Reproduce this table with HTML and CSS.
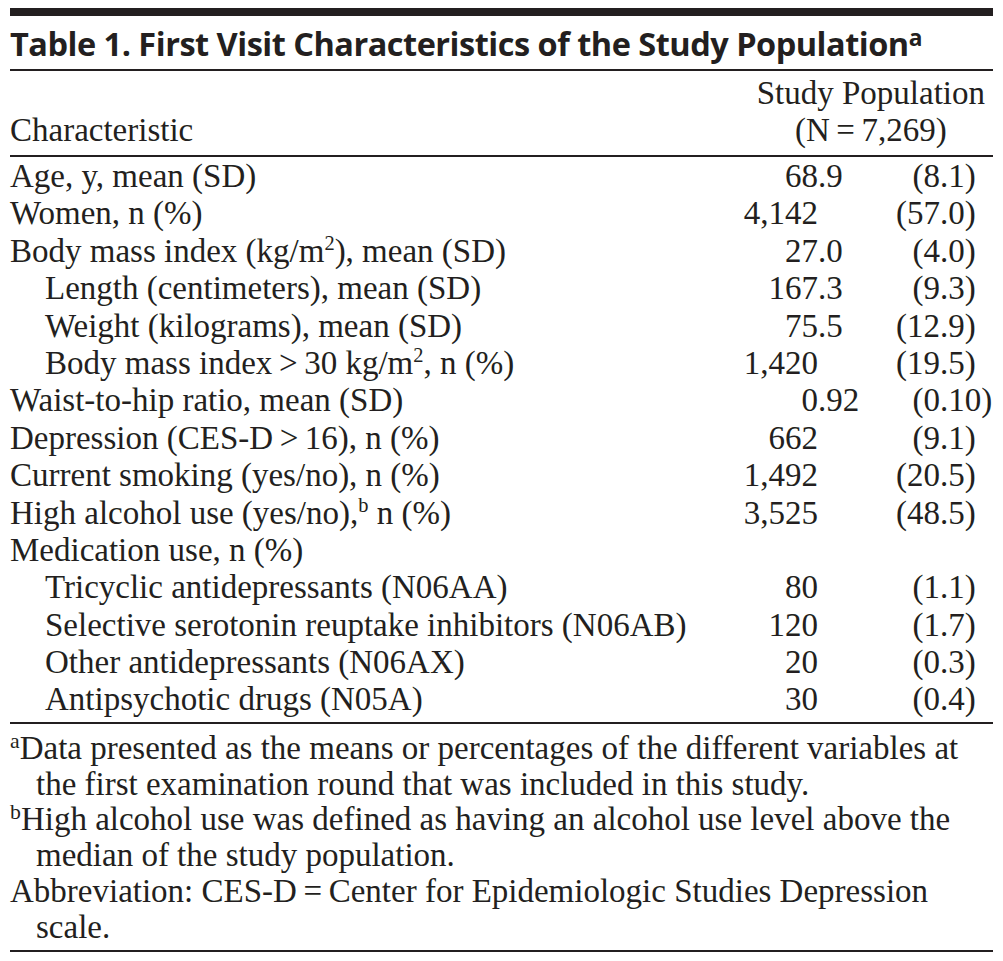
FILE: index.html
```html
<!DOCTYPE html>
<html>
<head>
<meta charset="utf-8">
<link rel="stylesheet" href="styles.css">
</head>
<body>
<div class="page">
  <div class="rule-thick"></div>
  <h1 class="title">Table 1. First Visit Characteristics of the Study Population<sup>a</sup></h1>
  <div class="head">
    <div class="head-label">Characteristic</div>
    <div class="head-col">Study Population<br>(N&#8201;=&#8201;7,269)</div>
  </div>
  <div class="body">
    <div class="row"><span class="lab">Age, y, mean (SD)</span><span class="num"><span class="i">68</span><span class="f">.9</span></span><span class="par"><span class="i">(8</span><span class="f">.1)</span></span></div>
    <div class="row"><span class="lab">Women, n (%)</span><span class="num"><span class="i">4,142</span><span class="f"></span></span><span class="par"><span class="i">(57</span><span class="f">.0)</span></span></div>
    <div class="row"><span class="lab">Body mass index (kg/m<sup>2</sup>), mean (SD)</span><span class="num"><span class="i">27</span><span class="f">.0</span></span><span class="par"><span class="i">(4</span><span class="f">.0)</span></span></div>
    <div class="row sub"><span class="lab">Length (centimeters), mean (SD)</span><span class="num"><span class="i">167</span><span class="f">.3</span></span><span class="par"><span class="i">(9</span><span class="f">.3)</span></span></div>
    <div class="row sub"><span class="lab">Weight (kilograms), mean (SD)</span><span class="num"><span class="i">75</span><span class="f">.5</span></span><span class="par"><span class="i">(12</span><span class="f">.9)</span></span></div>
    <div class="row sub"><span class="lab">Body mass index&#8201;&gt;&#8201;30 kg/m<sup>2</sup>, n (%)</span><span class="num"><span class="i">1,420</span><span class="f"></span></span><span class="par"><span class="i">(19</span><span class="f">.5)</span></span></div>
    <div class="row"><span class="lab">Waist-to-hip ratio, mean (SD)</span><span class="num"><span class="i">0</span><span class="f">.92</span></span><span class="par"><span class="i">(0</span><span class="f">.10)</span></span></div>
    <div class="row"><span class="lab">Depression (CES-D&#8201;&gt;&#8201;16), n (%)</span><span class="num"><span class="i">662</span><span class="f"></span></span><span class="par"><span class="i">(9</span><span class="f">.1)</span></span></div>
    <div class="row"><span class="lab">Current smoking (yes/no), n (%)</span><span class="num"><span class="i">1,492</span><span class="f"></span></span><span class="par"><span class="i">(20</span><span class="f">.5)</span></span></div>
    <div class="row"><span class="lab">High alcohol use (yes/no),<sup>b</sup> n (%)</span><span class="num"><span class="i">3,525</span><span class="f"></span></span><span class="par"><span class="i">(48</span><span class="f">.5)</span></span></div>
    <div class="row"><span class="lab">Medication use, n (%)</span></div>
    <div class="row sub"><span class="lab">Tricyclic antidepressants (N06AA)</span><span class="num"><span class="i">80</span><span class="f"></span></span><span class="par"><span class="i">(1</span><span class="f">.1)</span></span></div>
    <div class="row sub"><span class="lab">Selective serotonin reuptake inhibitors (N06AB)</span><span class="num"><span class="i">120</span><span class="f"></span></span><span class="par"><span class="i">(1</span><span class="f">.7)</span></span></div>
    <div class="row sub"><span class="lab">Other antidepressants (N06AX)</span><span class="num"><span class="i">20</span><span class="f"></span></span><span class="par"><span class="i">(0</span><span class="f">.3)</span></span></div>
    <div class="row sub"><span class="lab">Antipsychotic drugs (N05A)</span><span class="num"><span class="i">30</span><span class="f"></span></span><span class="par"><span class="i">(0</span><span class="f">.4)</span></span></div>
  </div>
  <div class="notes">
    <p><sup>a</sup>Data presented as the means or percentages of the different variables at the first examination round that was included in this study.</p>
    <p><sup>b</sup>High alcohol use was defined as having an alcohol use level above the median of the study population.</p>
    <p>Abbreviation: CES-D&#8201;=&#8201;Center for Epidemiologic Studies Depression scale.</p>
  </div>
</div>
</body>
</html>
```
FILE: styles.css
```css
html, body {
  margin: 0;
  padding: 0;
  background: #ffffff;
}
body {
  color: #231f20;
  font-family: "Liberation Serif", "Times New Roman", serif;
  font-size: 33px;
}
.page {
  width: 983px;
  margin-left: 10px;
  padding-top: 8px;
}
.rule-thick {
  height: 8px;
  background: #231f20;
}
.title {
  margin: 0;
  font-family: "Open Sans", Lato, sans-serif;
  font-weight: 700;
  font-size: 32.5px;
  line-height: 55px;
  height: 53px;
  border-bottom: 2px solid #231f20;
  letter-spacing: -0.5px;
  white-space: nowrap;
}
.title sup {
  font-size: 0.7em;
  line-height: 0;
  vertical-align: 0.45em;
  font-weight: 700;
}
.head {
  display: flex;
  justify-content: space-between;
  align-items: flex-end;
  line-height: 37px;
  padding: 4px 8px 6px 0;
  border-bottom: 2px solid #231f20;
}
.head-col {
  text-align: center;
}
.body {
  padding: 1px 0 3px;
  border-bottom: 2px solid #231f20;
}
.row {
  display: flex;
  height: 37.4px;
  line-height: 37.4px;
  white-space: nowrap;
}
.lab {
  flex: 1;
}
.sub .lab {
  padding-left: 35px;
}
sup {
  font-size: 0.62em;
  line-height: 0;
  vertical-align: 0.6em;
}
.num, .par {
  display: flex;
}
.num .i {
  width: 130px;
  text-align: right;
}
.num .f {
  width: 52px;
}
.par .i {
  width: 70px;
  text-align: right;
}
.par .f {
  width: 53px;
}
.notes {
  padding: 7px 0 4px;
  border-bottom: 2px solid #231f20;
}
.notes p {
  margin: 0;
  line-height: 35.8px;
  padding-left: 26px;
  text-indent: -26px;
}
.notes sup {
  font-size: 0.66em;
  vertical-align: 0.5em;
}
```
